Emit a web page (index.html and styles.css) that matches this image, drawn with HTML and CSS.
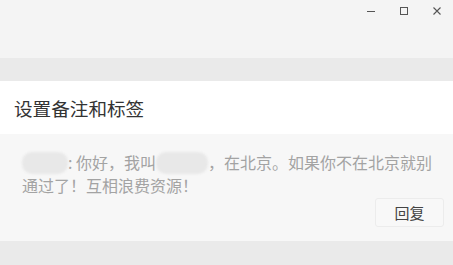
FILE: index.html
```html
<!DOCTYPE html>
<html>
<head>
<meta charset="utf-8">
<link rel="stylesheet" href="styles.css">
</head>
<body>
<div class="win">
  <div class="titlebar">
    <div class="controls">
      <span class="ctl"><svg width="10" height="10" viewBox="0 0 10 10"><path d="M1 5.5H9" stroke="#555" stroke-width="1"/></svg></span>
      <span class="ctl"><svg width="10" height="10" viewBox="0 0 10 10"><rect x="1.5" y="1.5" width="7" height="7" fill="none" stroke="#555" stroke-width="1"/></svg></span>
      <span class="ctl"><svg width="10" height="10" viewBox="0 0 10 10"><path d="M1.5 1.5L8.5 8.5M8.5 1.5L1.5 8.5" stroke="#555" stroke-width="1.1"/></svg></span>
    </div>
  </div>
  <div class="band"></div>
  <div class="header">设置备注和标签</div>
  <div class="content">
    <p class="msg"><span class="blur b1"></span>: 你好，我叫<span class="blur b2"></span>，在北京。如果你不在北京就别通过了！互相浪费资源！</p>
    <div class="actions"><button class="reply">回复</button></div>
  </div>
  <div class="footer"></div>
</div>
</body>
</html>
```
FILE: styles.css
```css
html, body { margin: 0; padding: 0; }
body {
  width: 453px; height: 265px; overflow: hidden;
  font-family: "Noto Sans CJK SC", "Noto Sans", sans-serif;
  background: #eaeaea;
}
.win { display: flex; flex-direction: column; height: 265px; }
.titlebar { height: 58px; background: #f4f4f4; display: flex; justify-content: flex-end; }
.controls { display: flex; height: 22px; align-items: center; padding-right: 0; }
.ctl { width: 33px; display: flex; justify-content: center; align-items: center; }
.ctl svg { display: block; }
.band { height: 23px; background: #eaeaea; }
.header {
  height: 53px; background: #ffffff; box-sizing: border-box;
  padding-left: 14px; display: flex; align-items: center;
  font-size: 18.6px; color: #333; padding-bottom: 1px;
}
.content { background: #f7f7f7; height: 107px; box-sizing: border-box; padding: 17px 8px 0 22px; }
.msg {
  margin: 0 7px 0 0; font-size: 16px; line-height: 23px; color: #a3a3a3;
}
.blur {
  display: inline-block; vertical-align: -5px; height: 22px;
  background: #e8e8e8; border-radius: 10px; filter: blur(1.2px);
}
.b1 { width: 46px; }
.b2 { width: 52px; }
.actions { display: flex; justify-content: flex-end; margin-top: 1px; }
.reply {
  width: 69px; height: 29px; background: #f8f8f8;
  border: 1px solid #ececec; border-radius: 3px;
  font-family: inherit; font-size: 15px; color: #444; padding: 0;
  margin-right: 1px;
}
.footer { flex: 1; background: #eaeaea; }
```
